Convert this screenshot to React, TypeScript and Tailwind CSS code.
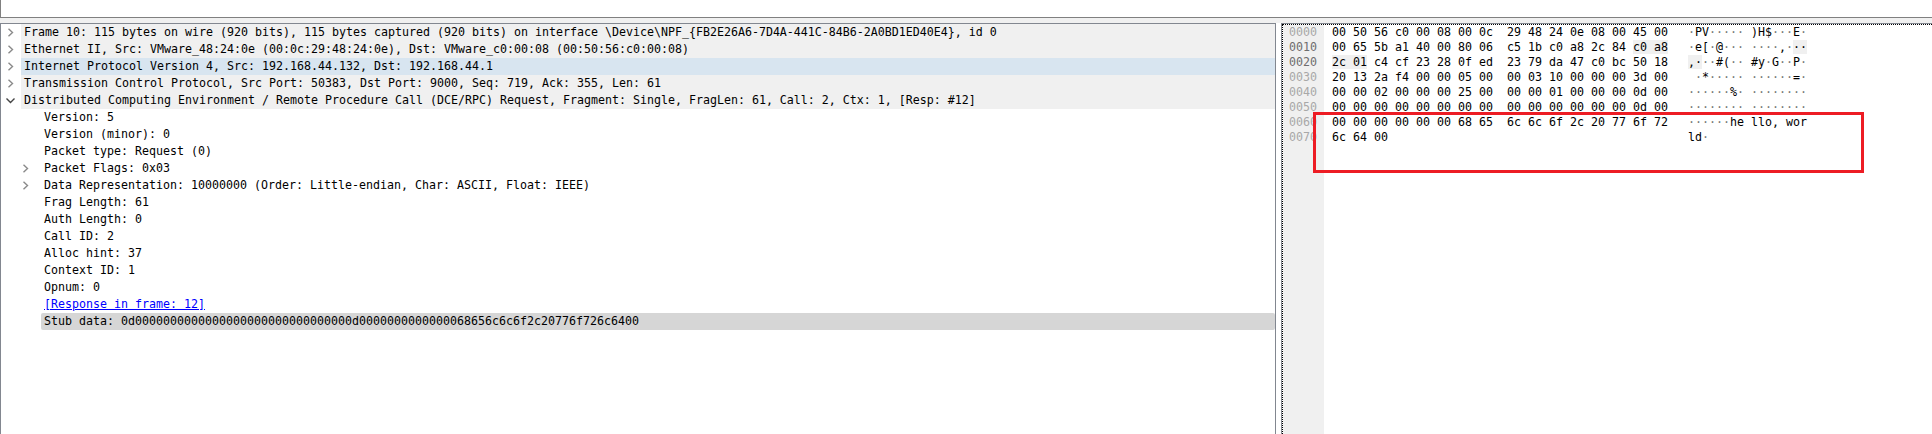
import React from "react";

const mono = "font-['DejaVu_Sans_Mono','Liberation_Mono',monospace] text-[11.63px] whitespace-pre";

type Row = { t: string; arrow?: "r" | "d"; bg?: string; sub?: boolean; link?: boolean };

const rows: Row[] = [
  { t: "Frame 10: 115 bytes on wire (920 bits), 115 bytes captured (920 bits) on interface \\Device\\NPF_{FB2E26A6-7D4A-441C-84B6-2A0BD1ED40E4}, id 0", arrow: "r", bg: "bg-[#f0f0f0]" },
  { t: "Ethernet II, Src: VMware_48:24:0e (00:0c:29:48:24:0e), Dst: VMware_c0:00:08 (00:50:56:c0:00:08)", arrow: "r", bg: "bg-[#f0f0f0]" },
  { t: "Internet Protocol Version 4, Src: 192.168.44.132, Dst: 192.168.44.1", arrow: "r", bg: "bg-[#d8e5f0]" },
  { t: "Transmission Control Protocol, Src Port: 50383, Dst Port: 9000, Seq: 719, Ack: 355, Len: 61", arrow: "r", bg: "bg-[#f0f0f0]" },
  { t: "Distributed Computing Environment / Remote Procedure Call (DCE/RPC) Request, Fragment: Single, FragLen: 61, Call: 2, Ctx: 1, [Resp: #12]", arrow: "d", bg: "bg-[#f0f0f0]" },
  { t: "Version: 5", sub: true },
  { t: "Version (minor): 0", sub: true },
  { t: "Packet type: Request (0)", sub: true },
  { t: "Packet Flags: 0x03", sub: true, arrow: "r" },
  { t: "Data Representation: 10000000 (Order: Little-endian, Char: ASCII, Float: IEEE)", sub: true, arrow: "r" },
  { t: "Frag Length: 61", sub: true },
  { t: "Auth Length: 0", sub: true },
  { t: "Call ID: 2", sub: true },
  { t: "Alloc hint: 37", sub: true },
  { t: "Context ID: 1", sub: true },
  { t: "Opnum: 0", sub: true },
  { t: "[Response in frame: 12]", sub: true, link: true },
  { t: "Stub data: 0d0000000000000000000000000000000d0000000000000068656c6c6f2c20776f726c6400", sub: true, bg: "bg-[#d6d6d6] rounded-[2px]" },
];

type Seg3 = [string, string?, string?];

const hex: { off: string; dark?: boolean; bytes: Seg3; ascii: Seg3 }[] = [
  { off: "0000", bytes: ["00 50 56 c0 00 08 00 0c  29 48 24 0e 08 00 45 00"], ascii: ["·PV····· )H$···E·"] },
  { off: "0010", dark: true, bytes: ["00 65 5b a1 40 00 80 06  c5 1b c0 a8 2c 84 ", "c0 a8"], ascii: ["·e[·@··· ····,·", "··"] },
  { off: "0020", dark: true, bytes: ["", "2c 01", " c4 cf 23 28 0f ed  23 79 da 47 c0 bc 50 18"], ascii: ["", ",·", "··#(·· #y·G··P·"] },
  { off: "0030", bytes: ["20 13 2a f4 00 00 05 00  00 03 10 00 00 00 3d 00"], ascii: [" ·*····· ······=·"] },
  { off: "0040", bytes: ["00 00 02 00 00 00 25 00  00 00 01 00 00 00 0d 00"], ascii: ["······%· ········"] },
  { off: "0050", bytes: ["00 00 00 00 00 00 00 00  00 00 00 00 00 00 0d 00"], ascii: ["········ ········"] },
  { off: "0060", bytes: ["00 00 00 00 00 00 68 65  6c 6c 6f 2c 20 77 6f 72"], ascii: ["······he llo, wor"] },
  { off: "0070", bytes: ["6c 64 00"], ascii: ["ld·"] },
];

function Arrow({ dir, className }: { dir: "r" | "d"; className: string }) {
  return (
    <svg width="9" height="9" viewBox="0 0 9 9" fill="none" className={className}>
      {dir === "r" ? (
        <path d="M2.5 0.8 L6.5 4.5 L2.5 8.2" stroke="#8a8a8a" strokeWidth="1.4" />
      ) : (
        <path d="M0.5 2.5 L4.5 6.5 L8.5 2.5" stroke="#444444" strokeWidth="1.4" />
      )}
    </svg>
  );
}

function Dots({ t }: { t?: string }) {
  if (!t) return null;
  return (
    <>
      {t.split(/(·+)/).map((p, i) =>
        p.startsWith("·") ? (
          <span key={i} className="text-[#777777]">{p}</span>
        ) : (
          <span key={i}>{p}</span>
        )
      )}
    </>
  );
}

function Seg({ s, dots }: { s: Seg3; dots?: boolean }) {
  if (dots) {
    return (
      <>
        <Dots t={s[0]} />
        {s[1] ? <span className="bg-[#f0f0f0]">{s[1]}</span> : null}
        <Dots t={s[2]} />
      </>
    );
  }
  return (
    <>
      {s[0]}
      {s[1] ? <span className="bg-[#f0f0f0]">{s[1]}</span> : null}
      {s[2]}
    </>
  );
}

export default function App() {
  return (
    <div className="w-[1932px] h-[434px] bg-[#f0f0f0] flex flex-col overflow-hidden text-black">
      <div className="h-[18px] shrink-0 bg-white border-l border-b border-[#808080]" />
      <div className="flex flex-1 mt-[5px] min-h-0 bg-white">
        <div className="w-[1276px] shrink-0 bg-white border-l border-t border-r border-[#828790] flex flex-col">
          {rows.map((r, i) => (
            <div key={i} className={`relative h-[17px] shrink-0 flex items-center ${mono} ${r.sub ? "ml-[40px] pl-[3px]" : "ml-[20px] pl-[3px]"} ${r.bg ?? ""}`}>
              {r.arrow ? (
                <Arrow dir={r.arrow} className={`absolute ${r.sub ? "left-[-20px]" : "left-[-15px]"} top-[4px]`} />
              ) : null}
              {r.link ? <span className="text-[#0000ff] underline">{r.t}</span> : <span>{r.t}</span>}
            </div>
          ))}
        </div>
        <div className="relative ml-[5px] flex-1 flex bg-white border-l border-t border-[#828790]">
          <div className="absolute inset-0 border-l border-t border-dotted border-black pointer-events-none" />
          <div className={`w-[41px] ml-[1px] mt-[1px] shrink-0 bg-[#f0f0f0] pl-[6px] ${mono}`}>
            {hex.map((h) => (
              <div key={h.off} className={`h-[15px] leading-[15px] ${h.dark ? "text-[#6e6e6e]" : "text-[#a8a8a8]"}`}>{h.off}</div>
            ))}
          </div>
          <div className={`ml-[8px] mt-[1px] ${mono}`}>
            {hex.map((h) => (
              <div key={h.off} className="h-[15px] leading-[15px]">
                <Seg s={h.bytes} />
              </div>
            ))}
          </div>
          <div className={`absolute left-[406px] top-[1px] ${mono}`}>
            {hex.map((h) => (
              <div key={h.off} className="h-[15px] leading-[15px]">
                <Seg s={h.ascii} dots />
              </div>
            ))}
          </div>
          <div className="absolute left-[31px] top-[88px] w-[551px] h-[61px] border-[3px] border-[#ed1c24]" />
        </div>
      </div>
    </div>
  );
}
